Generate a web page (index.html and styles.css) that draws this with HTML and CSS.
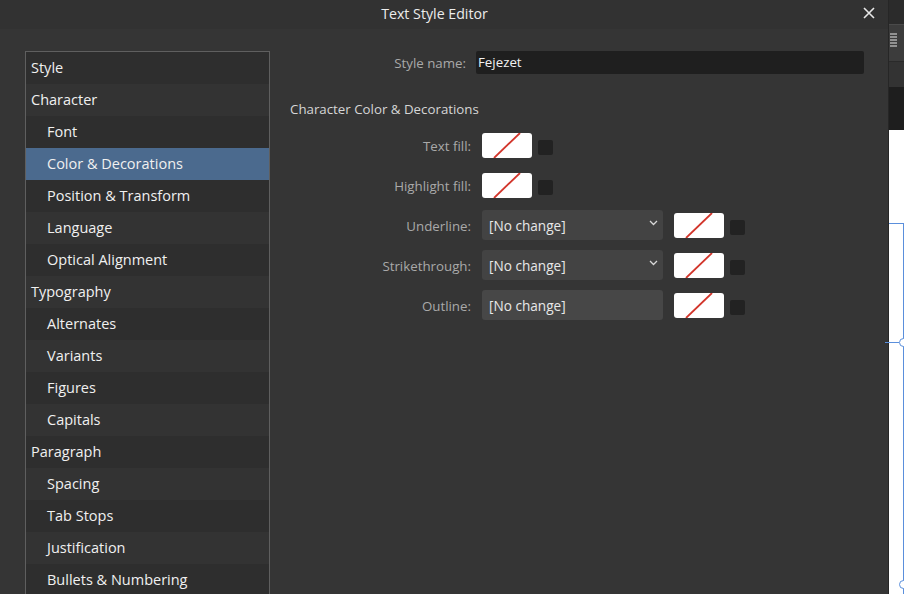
FILE: index.html
```html
<!DOCTYPE html>
<html>
<head>
<meta charset="utf-8">
<link rel="stylesheet" href="styles.css">
</head>
<body>
<div class="dialog">
  <div class="titlebar">
    <div class="title">Text Style Editor</div>
    <div class="close">
      <svg width="12" height="12" viewBox="0 0 12 12"><path d="M1 1L11 11M11 1L1 11" stroke="#e8e8e8" stroke-width="1.6" fill="none"/></svg>
    </div>
  </div>
  <div class="content">
    <ul class="sidebar">
      <li class="top">Style</li>
      <li class="top">Character</li>
      <li class="sub">Font</li>
      <li class="sub selected">Color &amp; Decorations</li>
      <li class="sub">Position &amp; Transform</li>
      <li class="sub">Language</li>
      <li class="sub">Optical Alignment</li>
      <li class="top">Typography</li>
      <li class="sub">Alternates</li>
      <li class="sub">Variants</li>
      <li class="sub">Figures</li>
      <li class="sub">Capitals</li>
      <li class="top">Paragraph</li>
      <li class="sub">Spacing</li>
      <li class="sub">Tab Stops</li>
      <li class="sub">Justification</li>
      <li class="sub">Bullets &amp; Numbering</li>
    </ul>
    <div class="main">
      <div class="name-row">
        <span class="name-label">Style name:</span>
        <div class="name-input">Fejezet</div>
      </div>
      <div class="heading">Character Color &amp; Decorations</div>
      <div class="rows">
        <div class="row">
          <span class="label">Text fill:</span>
          <div class="swatch"><svg width="50" height="25" viewBox="0 0 50 25"><line x1="12" y1="25" x2="38" y2="0" stroke="#d2352b" stroke-width="1.8"/></svg></div>
          <div class="check"></div>
        </div>
        <div class="row">
          <span class="label">Highlight fill:</span>
          <div class="swatch"><svg width="50" height="25" viewBox="0 0 50 25"><line x1="12" y1="25" x2="38" y2="0" stroke="#d2352b" stroke-width="1.8"/></svg></div>
          <div class="check"></div>
        </div>
        <div class="row">
          <span class="label">Underline:</span>
          <div class="select"><span>[No change]</span><svg width="9" height="6" viewBox="0 0 9 6"><path d="M1 1L4.5 4.5L8 1" stroke="#d8d8d8" stroke-width="1.3" fill="none"/></svg></div>
          <div class="swatch"><svg width="50" height="25" viewBox="0 0 50 25"><line x1="12" y1="25" x2="38" y2="0" stroke="#d2352b" stroke-width="1.8"/></svg></div>
          <div class="check"></div>
        </div>
        <div class="row">
          <span class="label">Strikethrough:</span>
          <div class="select"><span>[No change]</span><svg width="9" height="6" viewBox="0 0 9 6"><path d="M1 1L4.5 4.5L8 1" stroke="#d8d8d8" stroke-width="1.3" fill="none"/></svg></div>
          <div class="swatch"><svg width="50" height="25" viewBox="0 0 50 25"><line x1="12" y1="25" x2="38" y2="0" stroke="#d2352b" stroke-width="1.8"/></svg></div>
          <div class="check"></div>
        </div>
        <div class="row">
          <span class="label">Outline:</span>
          <div class="field">[No change]</div>
          <div class="swatch"><svg width="50" height="25" viewBox="0 0 50 25"><line x1="12" y1="25" x2="38" y2="0" stroke="#d2352b" stroke-width="1.8"/></svg></div>
          <div class="check"></div>
        </div>
      </div>
    </div>
  </div>
</div>
<div class="backdrop">
  <div class="bd-top"></div>
  <div class="bd-tool">
    <svg width="7" height="14" viewBox="0 0 7 14"><path d="M0 1H7M0 4H7M0 7H7M0 10H7M0 13H7" stroke="#e6e6e6" stroke-width="1.2"/></svg>
  </div>
  <div class="bd-bar"></div>
  <div class="bd-dark"></div>
  <div class="bd-canvas">
    <div class="sel-line"></div>
    <div class="sel-vert"></div>
    <div class="handle h1"></div>
    <div class="handle h2"></div>
  </div>
</div>
</body>
</html>
```

FILE: styles.css
```css
* { box-sizing: border-box; }
html, body {
  margin: 0;
  padding: 0;
}
body {
  width: 904px;
  height: 594px;
  overflow: hidden;
  display: flex;
  background: #353535;
  font-family: "Open Sans", "Noto Sans", sans-serif;
  font-size: 13.3px;
  color: #e8e8e8;
}
.dialog {
  width: 888px;
  height: 594px;
  display: flex;
  flex-direction: column;
  background: #353535;
}
.titlebar {
  height: 29px;
  flex: none;
  display: flex;
  align-items: center;
  background: #323232;
}
.title {
  width: 869px;
  text-align: center;
  font-size: 14.2px;
  color: #ececec;
  padding-bottom: 3px;
}
.close {
  width: 19px;
  display: flex;
  padding-bottom: 4px;
}
.close svg { margin-left: -6px; }
.content {
  flex: 1;
  display: flex;
  min-height: 0;
}
.sidebar {
  list-style: none;
  margin: 22px 0 0 25px;
  padding: 0;
  width: 245px;
  border: 1px solid #5f5f5f;
  border-bottom: none;
  align-self: flex-start;
  flex: none;
  font-size: 14.5px;
}
.sidebar li {
  height: 32px;
  line-height: 31px;
  white-space: nowrap;
  color: #f0f0f0;
  background: #2e2e2e;
}
.sidebar li:nth-child(even) { background: #333333; }
.sidebar li.top { padding-left: 5px; }
.sidebar li.sub { padding-left: 21px; }
.sidebar li.selected { background: #4b6a8e; }
.main {
  flex: 1;
  padding: 22px 0 0 20px;
}
.name-row {
  display: flex;
  align-items: center;
  height: 23px;
}
.name-label {
  width: 176px;
  text-align: right;
  color: #a9a9a9;
}
.name-input {
  margin-left: 10px;
  width: 388px;
  height: 23px;
  background: #1f1f1f;
  border-radius: 2px;
  padding-left: 2px;
  line-height: 23px;
  color: #f2f2f2;
}
.heading {
  margin-top: 24px;
  height: 20px;
  line-height: 22px;
  color: #d6d6d6;
}
.rows {
  margin-top: 7px;
  display: flex;
  flex-direction: column;
}
.row {
  height: 40px;
  display: flex;
  align-items: center;
}
.label {
  width: 181px;
  text-align: right;
  color: #a9a9a9;
  margin-right: 11px;
  padding-top: 2px;
}
.swatch {
  width: 50px;
  height: 25px;
  background: #ffffff;
  border-radius: 3px;
  overflow: hidden;
  flex: none;
}
.swatch svg { display: block; }
.check {
  width: 15px;
  height: 15px;
  margin-left: 6px;
  margin-top: 5px;
  background: #222222;
  border-radius: 2px;
  flex: none;
}
.select, .field {
  width: 181px;
  height: 30px;
  margin-right: 11px;
  border-radius: 3px;
  display: flex;
  align-items: center;
  justify-content: space-between;
  padding: 0 5px 0 7px;
  color: #e8e8e8;
  font-size: 13.6px;
  flex: none;
}
.select { background: #434343; }
.select svg { margin-bottom: 4px; }
.field { background: #474747; }
.backdrop {
  width: 16px;
  height: 594px;
  display: flex;
  flex-direction: column;
  border-left: 1px solid #262626;
}
.bd-top {
  height: 25px;
  background: #2b2b2b;
  border-bottom: 1px solid #4a4a4a;
}
.bd-tool {
  height: 37px;
  background: #3c3c3c;
  border-bottom: 1px solid #2a2a2a;
  padding: 8px 0 0 1px;
}
.bd-tool svg { display: block; }
.bd-bar {
  height: 25px;
  background: #333333;
}
.bd-dark {
  height: 43px;
  background: #1e1e1e;
}
.bd-canvas {
  flex: 1;
  background: #ffffff;
  position: relative;
}
.sel-line {
  position: absolute;
  left: 0;
  top: 93px;
  width: 16px;
  height: 1px;
  background: #5a8fdc;
}
.sel-vert {
  position: absolute;
  left: 14px;
  top: 93px;
  width: 1px;
  height: 400px;
  background: #5a8fdc;
}
.handle {
  position: absolute;
  width: 9px;
  height: 9px;
  border: 1px solid #5a8fdc;
  border-radius: 50%;
  background: #ffffff;
}
.h1 { left: 10px; top: 208px; }
.h2 { left: 10px; top: 450px; }
.h1::before {
  content: "";
  position: absolute;
  right: 8px;
  top: 3px;
  width: 14px;
  height: 1px;
  background: #5a8fdc;
}
```
